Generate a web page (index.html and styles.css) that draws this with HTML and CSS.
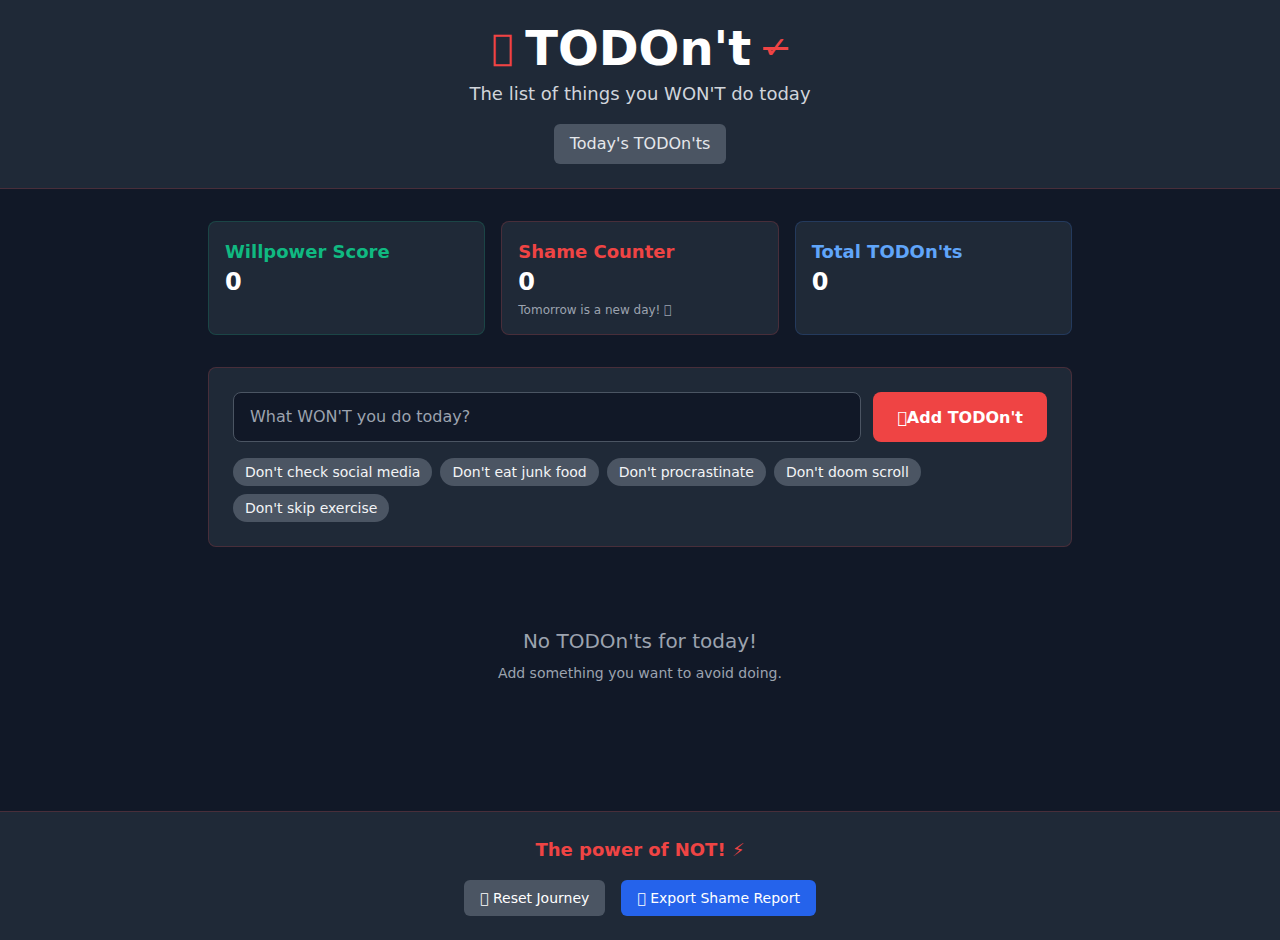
FILE: index.html
```html
<!DOCTYPE html>
<html lang="en">

<head>
    <meta charset="UTF-8">
    <meta name="viewport" content="width=device-width, initial-scale=1.0">
    <title>TODOn't</title>
    <link rel="stylesheet" href="styles.css">
</head>

<body>
    <header class="site-header">
        <h1 class="logo"><span class="logo-icon">&#xE000;</span><span>TODOn't</span><span class="logo-check">✓</span></h1>
        <p class="tagline">The list of things you WON'T do today</p>
        <button class="tab-button" type="button">Today's TODOn'ts</button>
    </header>

    <main class="container">
        <!-- Contadores -->
        <section class="stats">
            <div class="stat-card stat-green">
                <h3>Willpower Score</h3>
                <div class="stat-value">0</div>
            </div>
            <div class="stat-card stat-red">
                <h3>Shame Counter</h3>
                <div class="stat-value">0</div>
                <p class="stat-note">Tomorrow is a new day! &#xE000;</p>
            </div>
            <div class="stat-card stat-blue">
                <h3>Total TODOn'ts</h3>
                <div class="stat-value">0</div>
            </div>
        </section>

        <!-- Formulario -->
        <section class="add-card">
            <form class="add-form">
                <input type="text" class="add-input" placeholder="What WON'T you do today?">
                <button class="add-button" type="button">&#xE000;Add TODOn't</button>
            </form>
            <div class="chips">
                <button class="chip" type="button">Don't check social media</button>
                <button class="chip" type="button">Don't eat junk food</button>
                <button class="chip" type="button">Don't procrastinate</button>
                <button class="chip" type="button">Don't doom scroll</button>
                <button class="chip" type="button">Don't skip exercise</button>
            </div>
        </section>

        <section class="empty">
            <p class="empty-title">No TODOn'ts for today!</p>
            <p class="empty-text">Add something you want to avoid doing.</p>
        </section>
    </main>

    <footer class="site-footer">
        <p class="footer-text">The power of NOT! <span class="bolt">⚡</span></p>
        <div class="footer-actions">
            <button class="footer-button reset" type="button">&#xE000; Reset Journey</button>
            <button class="footer-button export" type="button">&#xE000; Export Shame Report</button>
        </div>
    </footer>
</body>

</html>
```

FILE: styles.css
```css
* {
    box-sizing: border-box;
}

body {
    font-family: "DejaVu Sans", sans-serif;
    background-color: #111827;
    color: #fff;
    margin: 0;
    min-height: 100vh;
    display: flex;
    flex-direction: column;
}

h1,
h3,
p {
    margin: 0;
}

button {
    font-family: inherit;
    border: none;
    cursor: pointer;
}

/* Cabecera */
.site-header {
    background-color: #1f2937;
    border-bottom: 1px solid rgba(239, 68, 68, 0.2);
    padding: 24px 16px;
    text-align: center;
}

.logo {
    display: flex;
    justify-content: center;
    align-items: center;
    gap: 12px;
    font-size: 48px;
    line-height: 48px;
    font-weight: bold;
}

.logo-icon {
    color: #ef4444;
    font-weight: normal;
    font-size: 36px;
}

.logo-check {
    color: #ef4444;
    font-size: 30px;
    font-weight: normal;
    text-decoration: line-through;
}

.tagline {
    margin-top: 8px;
    margin-bottom: 16px;
    font-size: 18px;
    line-height: 28px;
    color: #d1d5db;
}

.tab-button {
    background-color: #4b5563;
    color: #e5e7eb;
    font-size: 16px;
    line-height: 24px;
    padding: 8px 16px;
    border-radius: 6px;
}

.container {
    width: 100%;
    max-width: 896px;
    margin: 0 auto;
    padding: 32px 16px 0;
    flex: 1;
}

/* Contadores */
.stats {
    display: grid;
    grid-template-columns: repeat(3, 1fr);
    gap: 16px;
}

.stat-card {
    background-color: #1f2937;
    border: 1px solid;
    border-radius: 8px;
    padding: 16px;
    min-height: 114px;
}

.stat-card h3 {
    font-size: 18px;
    line-height: 28px;
    font-weight: 600;
}

.stat-green {
    border-color: rgba(16, 185, 129, 0.2);
}

.stat-green h3 {
    color: #10b981;
}

.stat-red {
    border-color: rgba(239, 68, 68, 0.2);
}

.stat-red h3 {
    color: #ef4444;
}

.stat-blue {
    border-color: rgba(59, 130, 246, 0.2);
}

.stat-blue h3 {
    color: #60a5fa;
}

.stat-value {
    font-size: 24px;
    line-height: 32px;
    font-weight: bold;
}

.stat-note {
    margin-top: 4px;
    font-size: 12px;
    line-height: 16px;
    color: #9ca3af;
}

/* Formulario */
.add-card {
    margin-top: 32px;
    background-color: #1f2937;
    border: 1px solid rgba(239, 68, 68, 0.2);
    border-radius: 8px;
    padding: 24px;
}

.add-form {
    display: flex;
    gap: 12px;
    margin-bottom: 16px;
}

.add-input {
    flex: 1;
    min-width: 0;
    background-color: #111827;
    border: 1px solid #4b5563;
    border-radius: 8px;
    color: #fff;
    font-family: inherit;
    font-size: 16px;
    line-height: 24px;
    padding: 12px 16px;
}

.add-input::placeholder {
    color: #9ca3af;
}

.add-button {
    background-color: #ef4444;
    color: #fff;
    font-size: 16px;
    font-weight: bold;
    padding: 12px 24px;
    border-radius: 8px;
}

.chips {
    display: flex;
    flex-wrap: wrap;
    gap: 8px;
}

.chip {
    background-color: #4b5563;
    color: #f3f4f6;
    font-size: 14px;
    line-height: 20px;
    padding: 4px 12px;
    border-radius: 9999px;
}

/* Estado vacío */
.empty {
    margin-top: 32px;
    padding: 48px 0;
    text-align: center;
}

.empty-title {
    font-size: 20px;
    line-height: 28px;
    color: #9ca3af;
}

.empty-text {
    margin-top: 8px;
    font-size: 14px;
    line-height: 20px;
    color: #9ca3af;
}

/* Pie de página */
.site-footer {
    background-color: #1f2937;
    border-top: 1px solid rgba(239, 68, 68, 0.2);
    padding: 24px 16px;
    text-align: center;
}

.footer-text {
    font-size: 18px;
    line-height: 28px;
    font-weight: bold;
    color: #ef4444;
}

.bolt {
    font-weight: normal;
}

.footer-actions {
    display: flex;
    justify-content: center;
    gap: 16px;
    margin-top: 16px;
}

.footer-button {
    color: #fff;
    font-size: 14px;
    line-height: 20px;
    padding: 8px 16px;
    border-radius: 6px;
}

.reset {
    background-color: #4b5563;
}

.export {
    background-color: #2563eb;
}
```
